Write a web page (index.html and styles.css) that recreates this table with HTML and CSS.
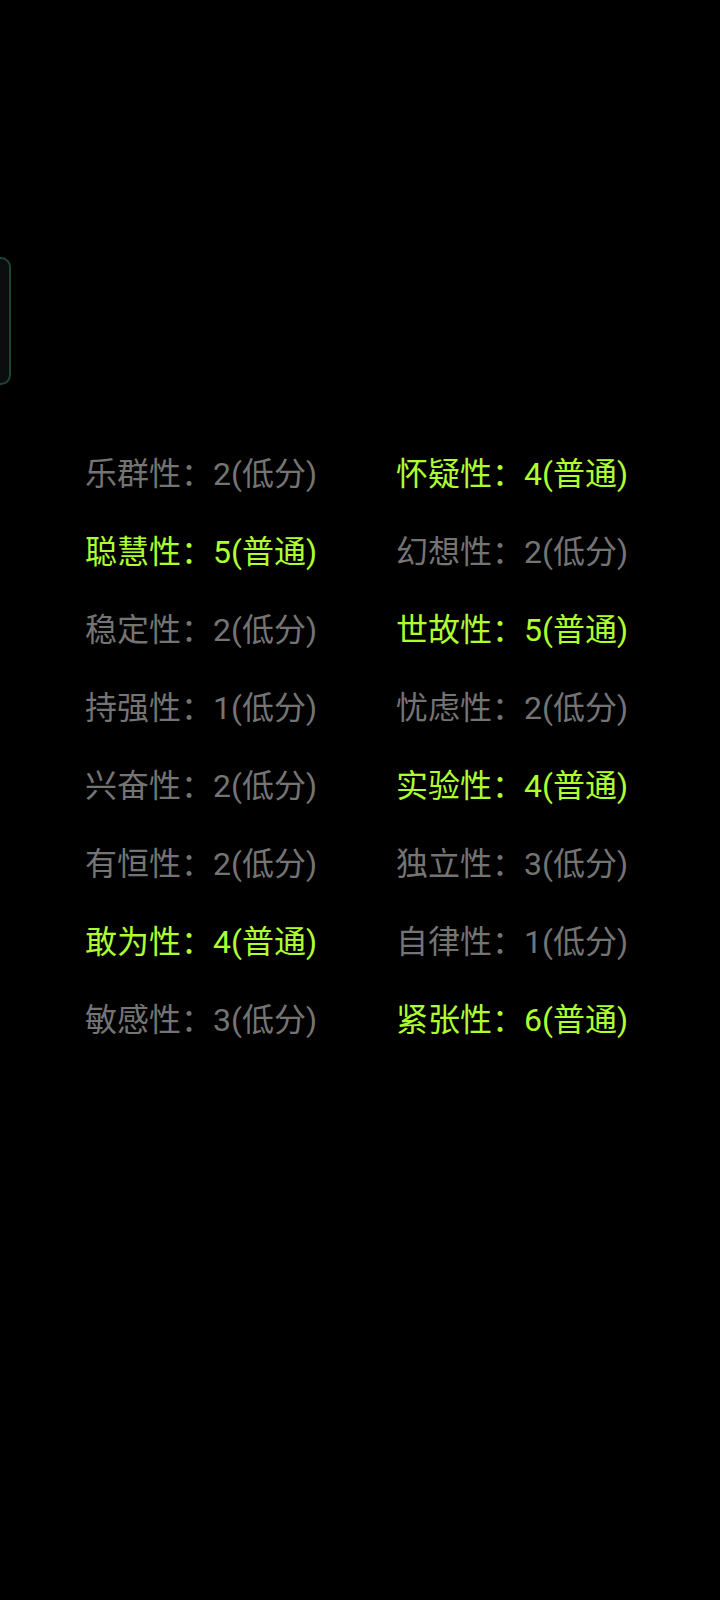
FILE: index.html
```html
<!DOCTYPE html>
<html lang="zh-CN">
<head>
<meta charset="utf-8">
<link rel="stylesheet" href="styles.css">
</head>
<body>
<div class="edge-handle"></div>
<div class="traits">
  <div class="trait low">乐群性：2(低分)</div>
  <div class="trait mid">怀疑性：4(普通)</div>
  <div class="trait mid">聪慧性：5(普通)</div>
  <div class="trait low">幻想性：2(低分)</div>
  <div class="trait low">稳定性：2(低分)</div>
  <div class="trait mid">世故性：5(普通)</div>
  <div class="trait low">持强性：1(低分)</div>
  <div class="trait low">忧虑性：2(低分)</div>
  <div class="trait low">兴奋性：2(低分)</div>
  <div class="trait mid">实验性：4(普通)</div>
  <div class="trait low">有恒性：2(低分)</div>
  <div class="trait low">独立性：3(低分)</div>
  <div class="trait mid">敢为性：4(普通)</div>
  <div class="trait low">自律性：1(低分)</div>
  <div class="trait low">敏感性：3(低分)</div>
  <div class="trait mid">紧张性：6(普通)</div>
</div>
</body>
</html>
```
FILE: styles.css
```css
html, body {
  margin: 0;
  padding: 0;
  background: #000;
  width: 720px;
  height: 1600px;
  overflow: hidden;
}
body {
  font-family: Roboto, "Noto Sans CJK SC", sans-serif;
  position: relative;
}
.edge-handle {
  position: absolute;
  left: -20px;
  top: 257px;
  width: 27px;
  height: 124px;
  background: #0c0d0f;
  border: 2px solid #1d4438;
  border-radius: 10px;
}
.traits {
  display: grid;
  grid-template-columns: 311px 311px;
  padding: 435px 0 0 85px;
}
.trait {
  font-size: 32px;
  line-height: 78px;
  white-space: nowrap;
}
.low { color: #747474; }
.mid { color: #adff2f; }
```
